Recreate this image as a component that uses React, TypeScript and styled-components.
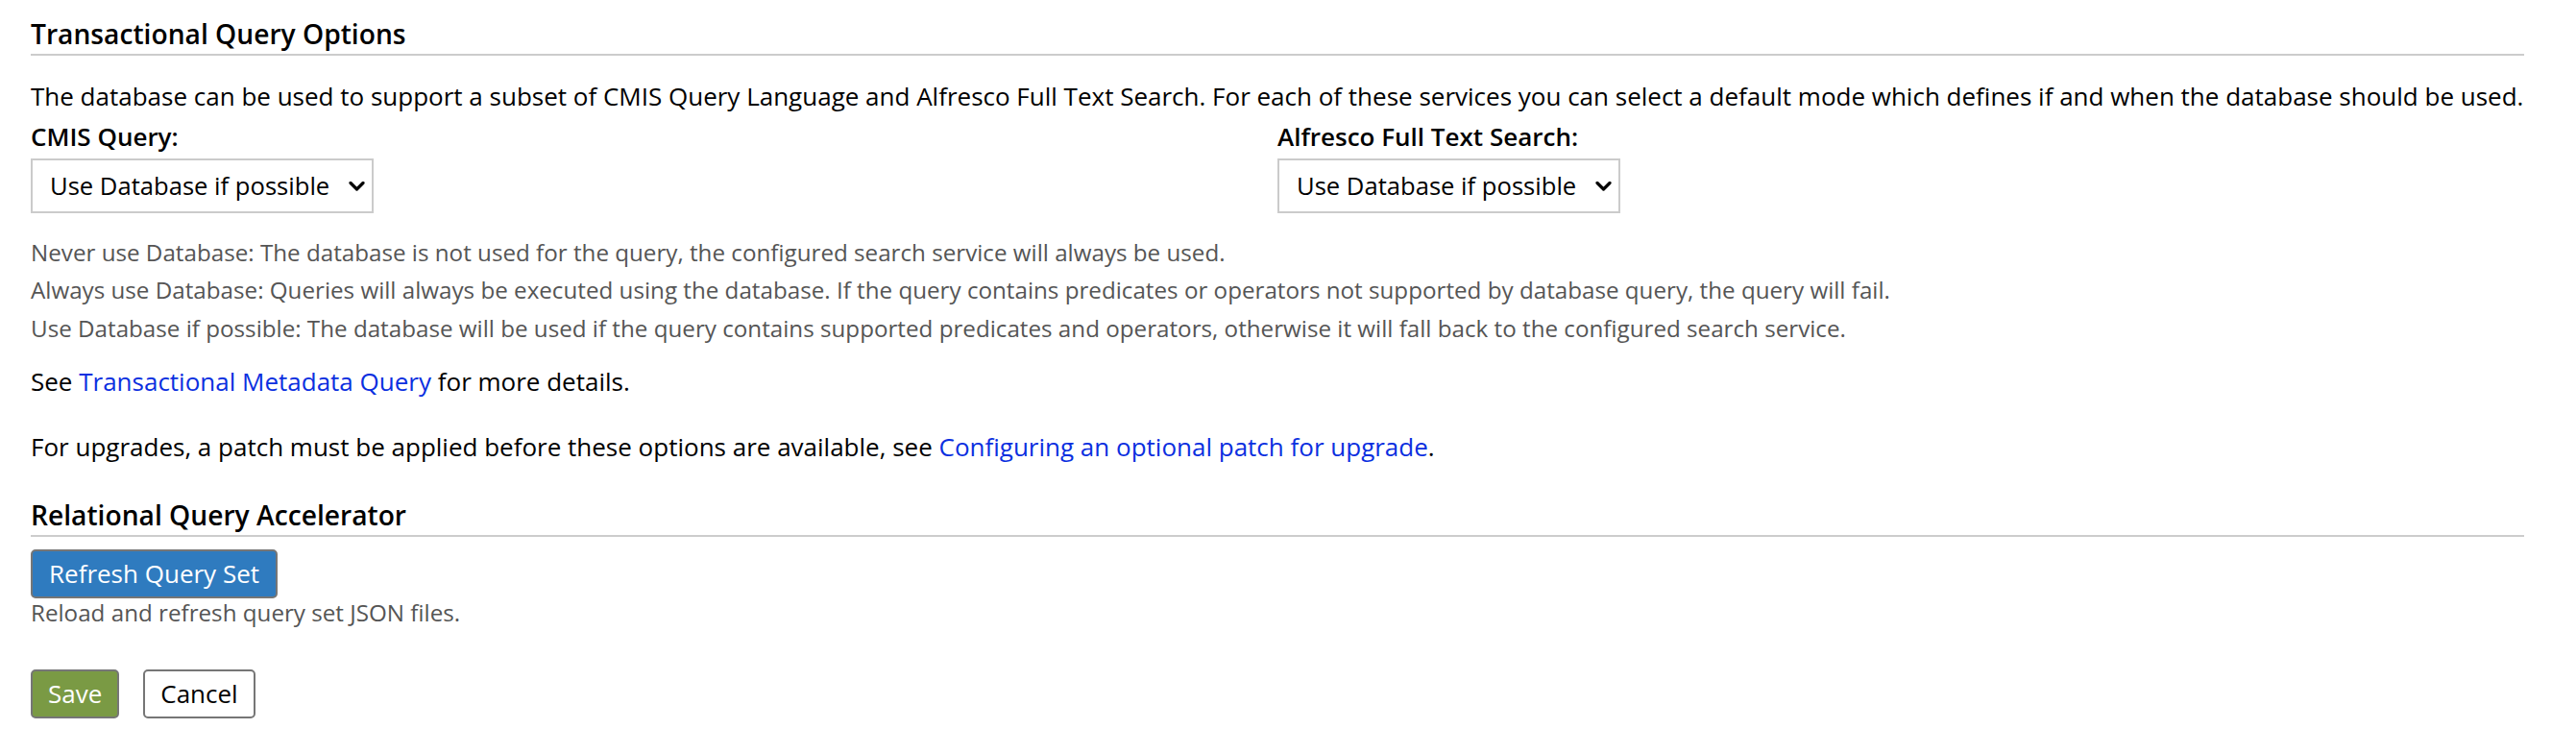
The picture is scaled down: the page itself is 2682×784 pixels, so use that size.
import React from "react";
import styled, { createGlobalStyle } from "styled-components";

const GlobalStyle = createGlobalStyle`
  html, body {
    margin: 0;
    padding: 0;
    background: #ffffff;
  }
  body {
    font-family: "Open Sans", "Noto Sans", sans-serif;
    color: #000000;
  }
`;

const Page = styled.div`
  width: 2596px;
  margin-left: 32px;
  padding-top: 18px;
  padding-bottom: 35px;
`;

const SectionTitle = styled.h2<{ $gap?: number }>`
  margin: ${(p) => p.$gap ?? 0}px 0 0 0;
  padding-bottom: 4px;
  border-bottom: 2px solid #cccccc;
  font-size: 28.2px;
  line-height: 34px;
  font-weight: 600;
  color: #000000;
`;

const Text = styled.p<{ $gap?: number }>`
  margin: ${(p) => p.$gap ?? 0}px 0 0 0;
  font-size: 26px;
  line-height: 36px;
  color: #000000;
`;

const Columns = styled.div`
  display: grid;
  grid-template-columns: 1fr 1fr;
  margin-top: 6px;
`;

const Field = styled.div`
  display: flex;
  flex-direction: column;
  align-items: flex-start;
`;

const Label = styled.label`
  font-size: 26px;
  line-height: 36px;
  font-weight: 600;
  color: #000000;
`;

const SelectWrap = styled.div`
  position: relative;
  margin-top: 5px;
`;

const Select = styled.select`
  appearance: none;
  -webkit-appearance: none;
  width: 357px;
  height: 57px;
  box-sizing: border-box;
  border: 2px solid #cbcbcb;
  border-radius: 0;
  background: #ffffff;
  padding: 0 40px 0 18px;
  font-family: "Open Sans", "Noto Sans", sans-serif;
  font-size: 25.6px;
  color: #000000;
  outline: none;
`;

const Chevron = styled.svg`
  position: absolute;
  right: 9px;
  top: 50%;
  transform: translateY(-50%);
  pointer-events: none;
`;

const Hints = styled.div`
  margin-top: 21px;
`;

const Hint = styled.div<{ $lh?: number }>`
  font-size: 24.2px;
  line-height: ${(p) => p.$lh ?? 39.3}px;
  color: #555555;
`;

const Link = styled.a`
  color: #0b2fe0;
  text-decoration: none;
`;

const Button = styled.button<{ $variant: "primary" | "save" | "plain" }>`
  box-sizing: border-box;
  height: 51px;
  padding: 0 ${(p) => (p.$variant === "primary" ? 17 : 16)}px;
  border: 2px solid #767676;
  border-radius: 5px;
  font-family: "Open Sans", "Noto Sans", sans-serif;
  font-size: 26px;
  line-height: 1;
  cursor: pointer;
  background: ${(p) =>
    p.$variant === "primary" ? "#2f7bbf" : p.$variant === "save" ? "#7a9a44" : "#ffffff"};
  color: ${(p) => (p.$variant === "plain" ? "#000000" : "#ffffff")};
`;

const ButtonRow = styled.div<{ $gap?: number }>`
  display: flex;
  gap: 25px;
  margin-top: ${(p) => p.$gap ?? 0}px;
`;

const ChevronIcon = () => (
  <Chevron width="17" height="10" viewBox="0 0 17 10">
    <path d="M2 1.5 L8.5 8 L15 1.5" fill="none" stroke="#000" strokeWidth="3.2" strokeLinecap="round" strokeLinejoin="round" />
  </Chevron>
);

const ModeSelect = ({ id }: { id: string }) => (
  <SelectWrap>
    <Select id={id} defaultValue="possible">
      <option value="never">Never use Database</option>
      <option value="always">Always use Database</option>
      <option value="possible">Use Database if possible</option>
    </Select>
    <ChevronIcon />
  </SelectWrap>
);

export default function App() {
  return (
    <>
      <GlobalStyle />
      <Page>
        <SectionTitle>Transactional Query Options</SectionTitle>
        <Text $gap={24}>
          The database can be used to support a subset of CMIS Query Language and Alfresco Full Text Search. For each of these services you can select a default mode which defines if and when the database should be used.
        </Text>
        <Columns>
          <Field>
            <Label htmlFor="cmis">CMIS Query:</Label>
            <ModeSelect id="cmis" />
          </Field>
          <Field>
            <Label htmlFor="afts">Alfresco Full Text Search:</Label>
            <ModeSelect id="afts" />
          </Field>
        </Columns>
        <Hints>
          <Hint>Never use Database: The database is not used for the query, the configured search service will always be used.</Hint>
          <Hint>Always use Database: Queries will always be executed using the database. If the query contains predicates or operators not supported by database query, the query will fail.</Hint>
          <Hint>Use Database if possible: The database will be used if the query contains supported predicates and operators, otherwise it will fall back to the configured search service.</Hint>
        </Hints>
        <Text $gap={18}>
          See <Link href="#">Transactional Metadata Query</Link> for more details.
        </Text>
        <Text $gap={32}>
          For upgrades, a patch must be applied before these options are available, see{" "}
          <Link href="#">Configuring an optional patch for upgrade</Link>.
        </Text>
        <SectionTitle $gap={36}>Relational Query Accelerator</SectionTitle>
        <ButtonRow $gap={13}>
          <Button $variant="primary">Refresh Query Set</Button>
        </ButtonRow>
        <Hint $lh={30}>Reload and refresh query set JSON files.</Hint>
        <ButtonRow $gap={44}>
          <Button $variant="save">Save</Button>
          <Button $variant="plain">Cancel</Button>
        </ButtonRow>
      </Page>
    </>
  );
}
